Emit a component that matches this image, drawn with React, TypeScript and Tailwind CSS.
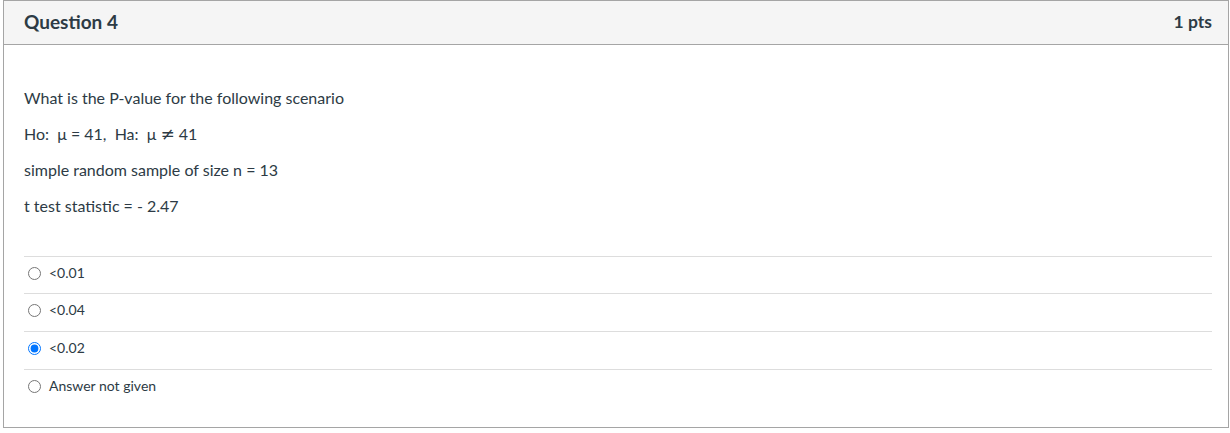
import React from "react";

const answers = [
  { id: "a1", label: "<0.01" },
  { id: "a2", label: "<0.04" },
  { id: "a3", label: "<0.02", checked: true },
  { id: "a4", label: "Answer not given" },
];

export default function App() {
  return (
    <div className="h-[433px] w-[1230px] bg-white pl-[3px] pr-[1px] font-['Lato','Liberation_Sans',sans-serif] text-[#2d3b45]">
      <div className="flex h-[428px] flex-col border border-[#a5a5a5]">
        <div className="flex h-[44px] items-center justify-between border-b border-[#a5a5a5] bg-[#f5f5f5] pl-5 pr-4">
          <span className="text-[19px] font-bold">Question 4</span>
          <span className="text-[17.5px] font-bold">1 pts</span>
        </div>
        <div className="flex flex-col gap-[12px] px-5 pt-[41px] text-[16px] leading-[24px]">
          <p>What is the P-value for the following scenario</p>
          <p>
            Ho:&nbsp; μ = 41,&nbsp; Ha:&nbsp; μ{" "}
            <span className="font-['DejaVu_Sans',sans-serif] text-[17px]">≠</span> 41
          </p>
          <p>simple random sample of size n = 13</p>
          <p>t test statistic = - 2.47</p>
        </div>
        <div className="ml-5 mr-4 mt-[38px] flex flex-col">
          {answers.map((a, i) => (
            <label
              key={a.id}
              className={`flex items-center gap-[8px] border-t border-[#dddddd] pl-[4px] pt-[6px] text-[14px] leading-[20px] ${
                i === 0 ? "pb-[10px]" : "pb-[11px]"
              }`}
            >
              <input
                type="radio"
                name="q4"
                defaultChecked={a.checked}
                className="m-0 h-[13px] w-[13px]"
              />
              <span>{a.label}</span>
            </label>
          ))}
        </div>
      </div>
    </div>
  );
}
